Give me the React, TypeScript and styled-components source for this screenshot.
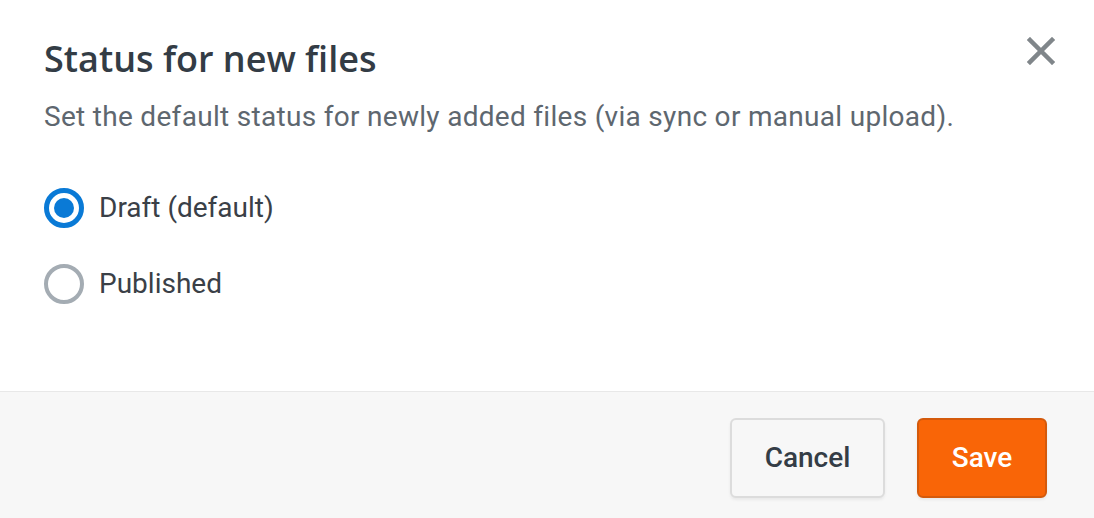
import React, { useState } from "react";
import styled, { createGlobalStyle } from "styled-components";

const Global = createGlobalStyle`
  html, body { margin: 0; padding: 0; background: #ffffff; }
  body { font-family: Roboto, "Liberation Sans", sans-serif; }
  * { box-sizing: border-box; }
`;

const Dialog = styled.div`
  width: 1094px;
  height: 518px;
  display: flex;
  flex-direction: column;
  background: #ffffff;
`;

const Body = styled.div`
  flex: 1;
  padding: 35px 39px 0 44px;
  display: flex;
  flex-direction: column;
`;

const Header = styled.div`
  display: flex;
  align-items: flex-start;
  justify-content: space-between;
`;

const Title = styled.h2`
  margin: 0;
  font-family: "Open Sans", "Noto Sans", sans-serif;
  font-weight: 600;
  font-size: 36px;
  line-height: 48px;
  color: #333c45;
`;

const CloseButton = styled.button`
  border: none;
  background: none;
  padding: 0;
  margin-top: 2px;
  width: 28px;
  height: 28px;
  cursor: pointer;
  display: flex;
  align-items: center;
  justify-content: center;
`;

const Description = styled.p`
  margin: 16px 0 0;
  font-size: 28px;
  line-height: 36px;
  letter-spacing: 0.3px;
  color: #5e676f;
`;

const Options = styled.div`
  display: flex;
  flex-direction: column;
  gap: 36px;
  margin-top: 53px;
`;

const Option = styled.label`
  display: flex;
  align-items: center;
  gap: 15px;
  cursor: pointer;
  font-size: 28px;
  line-height: 40px;
  color: #3a4047;
`;

const Radio = styled.span<{ $checked: boolean }>`
  flex: none;
  width: 40px;
  height: 40px;
  border-radius: 50%;
  border: ${(p) => (p.$checked ? "5px solid #0a7ad6" : "4px solid #a4acb3")};
  display: flex;
  align-items: center;
  justify-content: center;
  &::after {
    content: "";
    width: 20px;
    height: 20px;
    border-radius: 50%;
    background: #0a7ad6;
    display: ${(p) => (p.$checked ? "block" : "none")};
  }
`;

const Footer = styled.div`
  height: 127px;
  border-top: 1px solid #e8e8e8;
  background: #f7f7f7;
  display: flex;
  justify-content: flex-end;
  align-items: flex-start;
  gap: 32px;
  padding: 26px 47px 0 0;
`;

const Button = styled.button<{ $primary?: boolean }>`
  height: 80px;
  width: ${(p) => (p.$primary ? "130px" : "155px")};
  padding: 0 0 2px;
  border-radius: 6px;
  font-family: Roboto, "Liberation Sans", sans-serif;
  font-weight: 500;
  font-size: 28px;
  cursor: pointer;
  border: 2px solid ${(p) => (p.$primary ? "#d45a0c" : "#dcdcdc")};
  background: ${(p) => (p.$primary ? "#f96507" : "#f7f7f7")};
  color: ${(p) => (p.$primary ? "#ffffff" : "#343d46")};
  box-shadow: 0 2px 3px rgba(0, 0, 0, 0.06);
`;

export default function App() {
  const [value, setValue] = useState("draft");
  return (
    <>
      <Global />
      <Dialog>
        <Body>
          <Header>
            <Title>Status for new files</Title>
            <CloseButton aria-label="Close">
              <svg width="28" height="28" viewBox="0 0 28 28">
                <path
                  d="M3 3 L25 25 M25 3 L3 25"
                  stroke="#80868a"
                  strokeWidth="4.5"
                  strokeLinecap="square"
                />
              </svg>
            </CloseButton>
          </Header>
          <Description>
            Set the default status for newly added files (via sync or manual upload).
          </Description>
          <Options>
            <Option onClick={() => setValue("draft")}>
              <Radio $checked={value === "draft"} />
              Draft (default)
            </Option>
            <Option onClick={() => setValue("published")}>
              <Radio $checked={value === "published"} />
              Published
            </Option>
          </Options>
        </Body>
        <Footer>
          <Button>Cancel</Button>
          <Button $primary>Save</Button>
        </Footer>
      </Dialog>
    </>
  );
}
